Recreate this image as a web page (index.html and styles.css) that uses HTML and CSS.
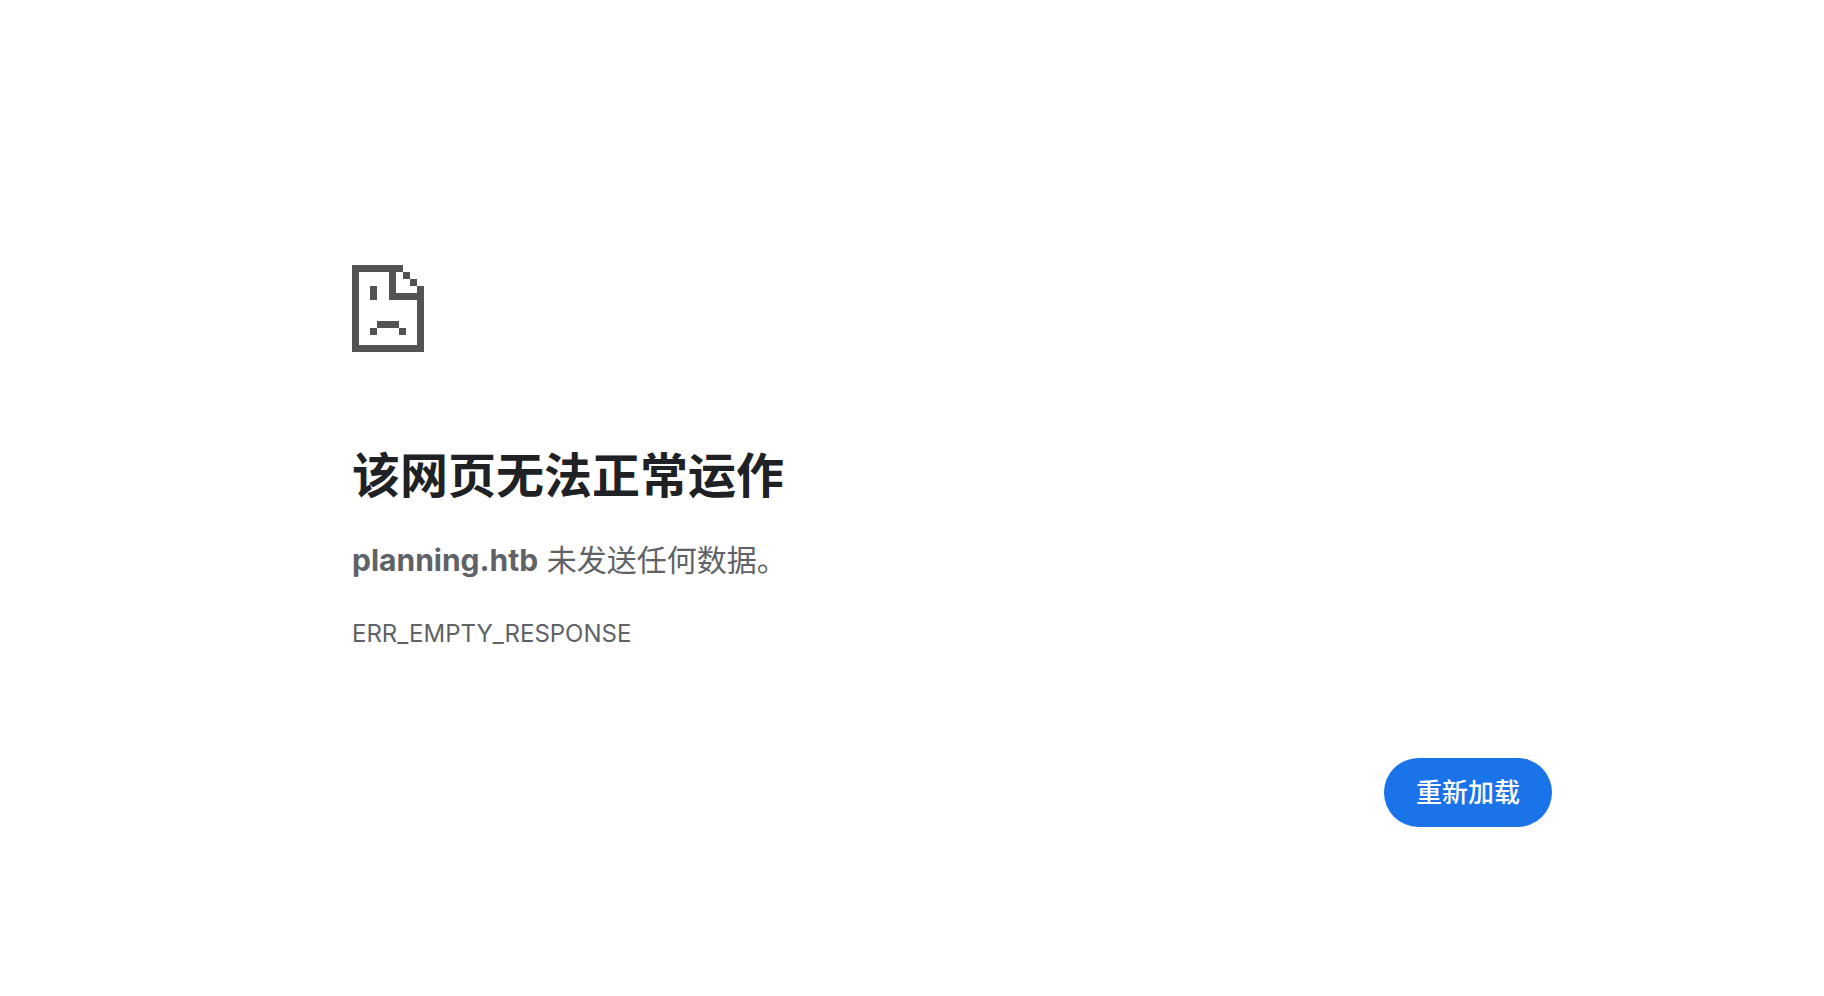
FILE: index.html
```html
<!DOCTYPE html>
<html lang="zh-CN">
<head>
<meta charset="utf-8">
<meta name="viewport" content="width=device-width, initial-scale=1">
<title>planning.htb</title>
<link rel="stylesheet" href="styles.css">
</head>
<body>
<main class="error-page">
  <svg class="error-icon" width="72" height="87" viewBox="0 0 72 87" shape-rendering="crispEdges" aria-hidden="true">
    <path d="M0 0H51V7H44V28H65V21H72V87H0ZM7 7V80H65V35H37V7ZM51 7H58V14H51ZM58 14H65V21H58ZM18 21H25V35H18ZM25 56H47V63H25ZM18 63H25V70H18ZM47 63H54V70H47Z" fill-rule="evenodd"/>
  </svg>
  <h1 class="title">该网页无法正常运作</h1>
  <p class="summary"><strong>planning.htb</strong> 未发送任何数据。</p>
  <p class="error-code">ERR_EMPTY_RESPONSE</p>
  <div class="actions">
    <button class="reload" type="button">重新加载</button>
  </div>
</main>
</body>
</html>
```
FILE: styles.css
```css
* {
  box-sizing: border-box;
}

body {
  margin: 0;
  padding: 265px 0 64px 80px;
  background: #fff;
  color: #5f6368;
  font-family: Inter, "Noto Sans CJK SC", sans-serif;
}

.error-page {
  max-width: 1200px;
  margin: 0 auto;
}

.error-icon {
  display: block;
  fill: #535353;
}

.title {
  margin: 88px 0 0;
  color: #202124;
  font-size: 48px;
  font-weight: 700;
  line-height: 72px;
}

.summary {
  margin: 24px 0 0;
  font-size: 30px;
  line-height: 48px;
}

.summary strong {
  font-weight: 700;
}

.error-code {
  margin: 32px 0 0;
  font-size: 24px;
  line-height: 36px;
}

.actions {
  display: flex;
  justify-content: flex-end;
  margin-top: 106px;
}

.reload {
  padding: 16px 32px;
  border: 0;
  border-radius: 36px;
  background: #1a73e8;
  color: #fff;
  font: 500 26px/37px Inter, "Noto Sans CJK SC", sans-serif;
  cursor: pointer;
}
```
